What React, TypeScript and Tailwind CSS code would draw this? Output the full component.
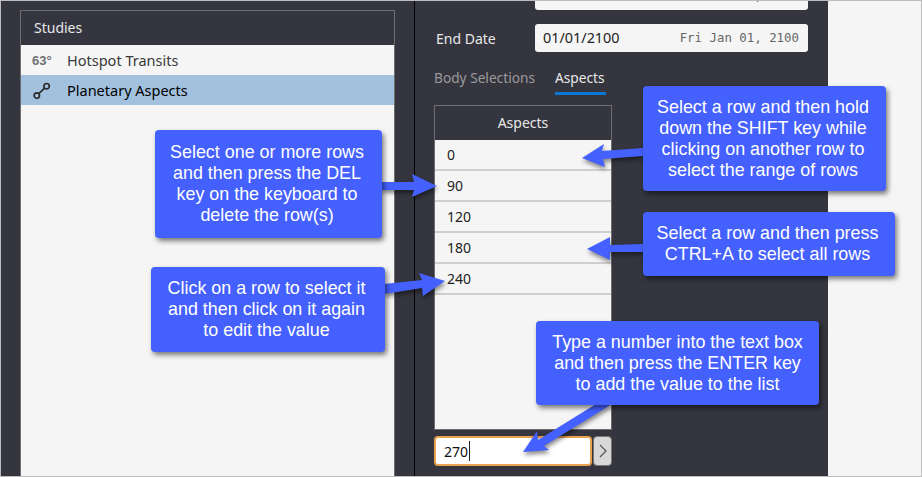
const ui = "font-['Noto_Sans',sans-serif]";

const callouts = [
  { cls: "left-[154px] top-[129px] w-[227px] h-[108px] pr-[3px]", lines: ["Select one or more rows", "and then press the DEL", "key on the keyboard to", "delete the row(s)"] },
  { cls: "left-[642px] top-[85px] w-[243px] h-[105px] pr-[3px]", lines: ["Select a row and then hold", "down the SHIFT key while", "clicking on another row to", "select the range of rows"] },
  { cls: "left-[642px] top-[211px] w-[252px] h-[64px] pr-[3px]", lines: ["Select a row and then press", "CTRL+A to select all rows"] },
  { cls: "left-[150px] top-[266px] w-[234px] h-[85px] pr-[3px]", lines: ["Click on a row to select it", "and then click on it again", "to edit the value"] },
  { cls: "left-[535px] top-[320px] w-[283px] h-[84px]", lines: ["Type a number into the text box", "and then press the ENTER key", "to add the value to the list"] },
];

const aspects = ["0", "90", "120", "180", "240"];

function Arrows() {
  return (
    <svg className="absolute left-[-1px] top-[-1px] drop-shadow-[1px_3px_2px_rgba(0,0,0,0.45)]" width="922" height="477" fill="#4460fe">
      <polygon points="381,182 414,182 412,174 437,186 412,197 414,190 381,190" />
      <polygon points="643,148 602,151 604,144 582,158 605,167 603,159 643,156" />
      <polygon points="643,244 610,245 610,237 587,249 610,260 610,252 643,252" />
      <polygon points="384,284 422,280 419,273 445,281 423,296 422,288 384,294" />
      <polygon points="596,404 538,440 537,431 523,452 549,450 544,446 612,404" />
    </svg>
  );
}

export default function App() {
  return (
    <div className={`relative flex h-[477px] w-[922px] overflow-hidden border border-[#bdbdbd] bg-[#f5f5f5] text-[14px] ${ui}`}>
      {/* Left pane */}
      <div className="flex w-[413px] flex-col bg-[#35353f] pl-[19px] pr-[19px] pt-[9px]">
        <div className="flex flex-1 flex-col border border-b-0 border-[#6e6e6e]">
          <div className="flex h-[34px] items-center pb-[2px] pl-[13px] text-[#e8e8e8]">Studies</div>
          <div className="flex-1 bg-[#f5f5f5]">
            <div className="flex h-[30px] items-center pt-px text-[14.5px] text-[#3a3a3a]">
              <span className="w-[46px] pl-[11px] font-['Liberation_Sans',sans-serif] text-[13px] font-bold text-[#707070]">63°</span>
              <span>Hotspot Transits</span>
            </div>
            <div className="flex h-[30px] items-center bg-[#a2c1de] pt-px text-[14.5px] text-black">
              <span className="w-[46px] pl-[12px]">
                <svg width="18" height="18" viewBox="0 0 18 18" fill="none" stroke="#2b2b2b" strokeWidth="1.7">
                  <circle cx="3.8" cy="13.6" r="2.7" />
                  <circle cx="13.6" cy="4.2" r="2.7" />
                  <line x1="5.8" y1="11.6" x2="11.6" y2="6.2" />
                </svg>
              </span>
              <span>Planetary Aspects</span>
            </div>
          </div>
        </div>
      </div>
      <div className="w-px bg-black" />

      {/* Right pane */}
      <div className="flex w-[413px] flex-col bg-[#35353f] pl-[19px]">
        <div className="ml-[101px] mt-[-19px] flex h-[28px] w-[273px] items-center justify-between rounded-[3px] bg-[#f5f5f5] pl-[8px] pr-[9px]">
          <span className="text-[14.4px] text-[#222]">01/01/1900</span>
          <span className="font-['DejaVu_Sans_Mono',monospace] text-[12.4px] text-[#666]">Mon Jan 01, 1900</span>
        </div>
        <div className="mt-[14px] flex h-[28px] items-center">
          <span className="ml-[2px] w-[99px] text-[#e8e8e8]">End Date</span>
          <div className="flex h-[28px] w-[273px] items-center justify-between rounded-[3px] bg-[#f5f5f5] pl-[8px] pr-[9px]">
            <span className="text-[14.4px] text-[#222]">01/01/2100</span>
            <span className="font-['DejaVu_Sans_Mono',monospace] text-[12.4px] text-[#666]">Fri Jan 01, 2100</span>
          </div>
        </div>
        <div className="mt-[16px] flex h-[27px] gap-[20px] text-[13.7px]">
          <span className="text-[#9a9a9a]">Body Selections</span>
          <span className="border-b-[3px] border-[#0a78d2] pr-[2px] text-[#e8e8e8]">Aspects</span>
        </div>
        <div className="mt-[10px] flex h-[325px] w-[178px] flex-col border border-[#6e6e6e]">
          <div className="flex h-[34px] items-center justify-center pb-[2px] text-[#e8e8e8]">Aspects</div>
          <div className="flex-1 bg-[#f5f5f5] text-[#222]">
            {aspects.map((a) => (
              <div key={a} className="flex h-[31px] items-center border-b-2 border-[#cfcfcf] pl-[12px]">{a}</div>
            ))}
          </div>
        </div>
        <div className="mt-[6px] flex h-[30px] w-[178px] gap-px">
          <div className="flex w-[158px] items-center rounded-[4px] border-2 border-[#e8a24e] bg-white pl-[8px] text-[#111]">
            270<span className="ml-px h-[20px] w-px bg-[#222]" />
          </div>
          <button className="flex w-[19px] items-center justify-center rounded-[4px] border border-[#777] bg-[#d8d8d8]">
            <svg width="10" height="16" viewBox="0 0 10 16" fill="none" stroke="#555" strokeWidth="1.2">
              <polyline points="2,2 8,8 2,14" />
            </svg>
          </button>
        </div>
      </div>

      {/* Annotations */}
      <Arrows />
      {callouts.map((c) => (
        <div
          key={c.lines[0]}
          className={`absolute flex flex-col items-center justify-center rounded-[4px] bg-[#4460fe] font-['Liberation_Sans',sans-serif] text-[17.9px] leading-[21px] text-white shadow-[2px_3px_5px_rgba(0,0,0,0.5)] ${c.cls}`}
        >
          {c.lines.map((l) => (
            <div key={l}>{l}</div>
          ))}
        </div>
      ))}
    </div>
  );
}
